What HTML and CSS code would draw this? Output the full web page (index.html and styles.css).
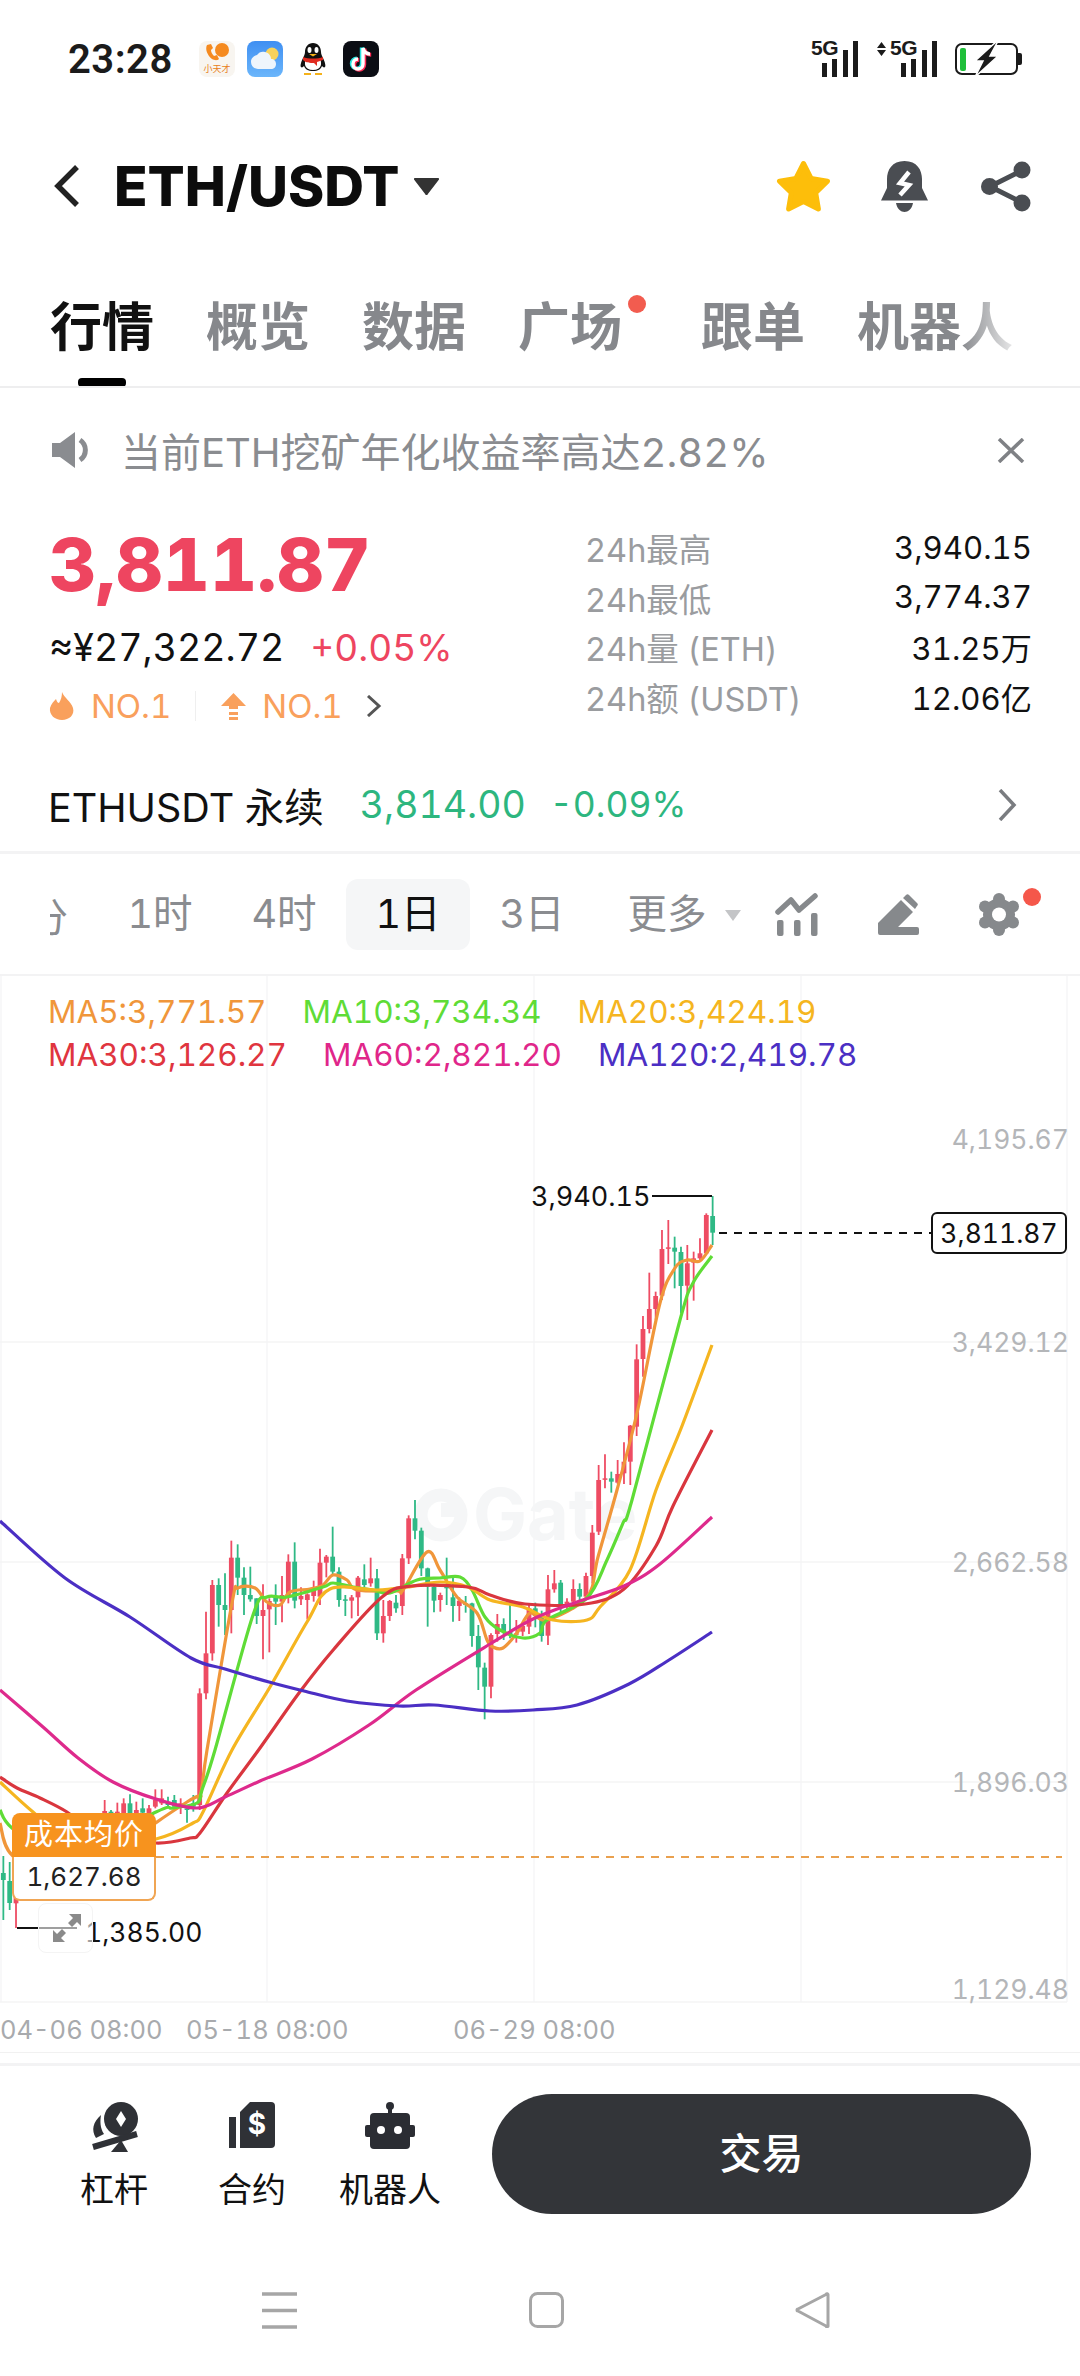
FILE: index.html
```html
<!DOCTYPE html>
<html lang="zh">
<head>
    <meta charset="UTF-8">
    <title>ETH/USDT</title>
    <meta name="viewport" content="width=device-width">
    <link rel="stylesheet" href="styles.css">
</head>
<body>
<section class="status-bar">
    <span class="status-time">23:28</span>
    <svg class="app-icon" width="36" height="36" viewBox="0 0 36 36">
        <rect width="36" height="36" rx="8" fill="#f8f5f0"/>
        <path d="M8 4c-2 4 0 10 5 14 2 1 5 2 7 0l-2-4-3 1c-2-2-3-4-3-6l2-2-2-4z" fill="#f58a1f"/>
        <circle cx="23" cy="9" r="7" fill="#f58a1f"/>
        <text class="app-icon-text" x="18" y="31">小天才</text>
    </svg>
    <svg class="app-icon" width="36" height="36" viewBox="0 0 36 36">
        <defs><linearGradient id="skyFill" x1="0" y1="0" x2="0" y2="1"><stop offset="0" stop-color="#3f8ff2"/><stop offset="1" stop-color="#6bb6fb"/></linearGradient></defs>
        <rect width="36" height="36" rx="8" fill="url(#skyFill)"/>
        <circle cx="25" cy="13" r="6.500" fill="#f7d25c"/>
        <path d="M11 28c-4 0-7-3-7-7s3-6 6-7c2-3 5-4 8-3 4 1 6 4 6 7 3 0 5 2 5 5s-2 5-5 5H11z" fill="#eef5fc"/>
    </svg>
    <svg class="app-icon app-icon-qq" width="26" height="32" viewBox="0 0 26 32">
        <path d="M13 0c5 0 8 4 8 9 0 2 1 4 2 6 2 4 3 8 2 9-1 1-2 0-3-1-1 3-4 5-9 5s-8-2-9-5c-1 1-2 2-3 1-1-1 0-5 2-9 1-2 2-4 2-6 0-5 3-9 8-9z" fill="#111"/>
        <path d="M6 16c-2 4-2 11 7 11s9-7 7-11H6z" fill="#fff"/>
        <path d="M3 14c5 2 15 2 20 0v3l-6 2v4l-3-3c-4 0-8 0-11-3v-3z" fill="#e02b20"/>
        <ellipse cx="9.500" cy="7" rx="2" ry="3" fill="#fff"/><ellipse cx="16.500" cy="7" rx="2" ry="3" fill="#fff"/>
        <path d="M9 11h8l-4 2.500z" fill="#f5b21a"/>
        <path d="M4 30h7v2H4zM15 30h7v2h-7z" fill="#f5b21a"/>
    </svg>
    <svg class="app-icon" width="36" height="36" viewBox="0 0 36 36">
        <rect width="36" height="36" rx="8" fill="#0b0d14"/>
        <path d="M20 7v16a5 5 0 1 1-5-5M20 7c1 4 4 6 7 6" fill="none" stroke="#25e3e0" stroke-width="4" transform="translate(-1.200 -.5)"/>
        <path d="M20 7v16a5 5 0 1 1-5-5M20 7c1 4 4 6 7 6" fill="none" stroke="#fb2c55" stroke-width="4" transform="translate(1.200 .8)"/>
        <path d="M20 7v16a5 5 0 1 1-5-5M20 7c1 4 4 6 7 6" fill="none" stroke="#fff" stroke-width="3.400"/>
    </svg>
    <div class="status-right">
        <div class="signal">
            <span class="signal-label">5G</span>
            <svg width="38" height="36" viewBox="0 0 38 36"><path d="M1 22h5v14H1zM11 18h5v18h-5zM22 9h5v27h-5zM32 0h5v36h-5z" fill="#1b1b1b"/></svg>
        </div>
        <div class="signal signal-data">
            <svg class="signal-arrows" width="9" height="14" viewBox="0 0 9 14"><path d="M4.500 0l4.500 6H0zM4.500 14L0 8h9z" fill="#1b1b1b"/></svg>
            <span class="signal-label">5G</span>
            <svg width="38" height="36" viewBox="0 0 38 36"><path d="M1 22h5v14H1zM11 18h5v18h-5zM22 9h5v27h-5zM32 0h5v36h-5z" fill="#1b1b1b"/></svg>
        </div>
        <svg class="battery" width="67" height="36" viewBox="0 0 67 36">
            <rect x="1" y="3" width="61" height="30" rx="6" fill="none" stroke="#1b1b1b" stroke-width="2"/>
            <path d="M63 12h2a2 2 0 0 1 2 2v8a2 2 0 0 1-2 2h-2z" fill="#1b1b1b"/>
            <rect x="5" y="7" width="6" height="23" rx="2" fill="#1fbf3a"/>
            <path d="M42 0L20 20h8l-8 16 23-21h-8l8-15z" fill="#1b1b1b" stroke="#fff" stroke-width="1.500"/>
        </svg>
    </div>
</section>

<header class="title-bar">
    <svg class="back-icon" width="26" height="42" viewBox="0 0 26 42"><path d="M23 2L4 21l19 19" fill="none" stroke="#222" stroke-width="5.500"/></svg>
    <h1 class="pair-name">ETH/USDT</h1>
    <svg class="pair-caret" width="25" height="17" viewBox="0 0 25 17"><path d="M1 0h23a1 1 0 0 1 1 1.500L13.500 16.500a1 1 0 0 1-2 0L0 1.500A1 1 0 0 1 1 0z" fill="#333"/></svg>
    <div class="title-tools">
        <svg width="55" height="52" viewBox="0 0 55 52"><path d="M27.500 3.500l7.600 15 16.400 2.600-11.800 11.700 2.700 16.200-14.900-7.600-14.900 7.600 2.700-16.200L3.500 21.100l16.400-2.600z" fill="#fdbe0a" stroke="#fdbe0a" stroke-width="5" stroke-linejoin="round"/></svg>
        <svg class="bell-icon" width="47" height="51" viewBox="0 0 47 51">
            <path d="M23.500 0C11 0 6 9 6 18v9L0 39.500h47L41 27v-9C41 9 36 0 23.500 0z" fill="#4a4d52"/>
            <path d="M15 42h17c-1 6-5 9-8.500 9S16 48 15 42z" fill="#4a4d52"/>
            <path d="M28 11l-9 11 9 2-9 10" fill="none" stroke="#fff" stroke-width="4.500"/>
        </svg>
        <svg width="50" height="51" viewBox="0 0 50 51">
            <path d="M41 9.500L9 25.500l32 16" fill="none" stroke="#4a4d52" stroke-width="5"/>
            <circle cx="41" cy="9" r="8.500" fill="#4a4d52"/><circle cx="8.500" cy="25.500" r="8.500" fill="#4a4d52"/><circle cx="41" cy="42" r="8.500" fill="#4a4d52"/>
        </svg>
    </div>
</header>

<nav class="tabs">
    <a class="tab tab-active">行情</a>
    <a class="tab">概览</a>
    <a class="tab">数据</a>
    <a class="tab tab-dot">广场</a>
    <a class="tab">跟单</a>
    <a class="tab">机器人</a>
</nav>

<section class="notice">
    <svg width="41" height="36" viewBox="0 0 41 36">
        <path d="M0 11h8L23 0v36L8 25H0z" fill="#8a8c90"/>
        <path d="M28 8a12 12 0 0 1 0 20" fill="none" stroke="#8a8c90" stroke-width="5"/>
    </svg>
    <p class="notice-text">当前ETH挖矿年化收益率高达2.82%</p>
    <svg class="notice-close" width="28" height="25" viewBox="0 0 28 25"><path d="M2 1l24 23M26 1L2 24" fill="none" stroke="#7f8185" stroke-width="3.500"/></svg>
</section>

<section class="quote">
    <div class="quote-main">
        <div class="last-price">3,811.87</div>
        <div class="quote-sub">
            <span class="cny-price">≈¥27,322.72</span>
            <span class="change-up">+0.05%</span>
        </div>
        <div class="rank-row">
            <svg width="26" height="28" viewBox="0 0 26 28"><path d="M13 0c2 6 9 9 11 16 2 7-4 12-11 12S0 23 1 16c1-4 4-7 6-9 1 3 2 4 3 4 2-3 3-7 3-11z" fill="#f9a05c"/></svg>
            <span class="rank-text">NO.1</span>
            <i class="rank-sep"></i>
            <svg width="25" height="27" viewBox="0 0 25 27"><path d="M12.500 0L25 13h-8v3H8v-3H0zM8 19h9v3H8zM8 24h9v3H8z" fill="#f9a05c"/></svg>
            <span class="rank-text">NO.1</span>
            <svg class="rank-more" width="16" height="22" viewBox="0 0 16 22"><path d="M2 1l11 10L2 21" fill="none" stroke="#555" stroke-width="3"/></svg>
        </div>
    </div>
    <dl class="stats">
        <div class="stat-row"><dt>24h最高</dt><dd>3,940.15</dd></div>
        <div class="stat-row"><dt>24h最低</dt><dd>3,774.37</dd></div>
        <div class="stat-row"><dt>24h量 (ETH)</dt><dd>31.25万</dd></div>
        <div class="stat-row"><dt>24h额 (USDT)</dt><dd>12.06亿</dd></div>
    </dl>
</section>

<section class="perp-row">
    <span class="perp-name">ETHUSDT 永续</span>
    <span class="perp-price">3,814.00</span>
    <span class="perp-change">-0.09%</span>
    <svg class="perp-more" width="19" height="32" viewBox="0 0 19 32"><path d="M2 1l14 15L2 31" fill="none" stroke="#7a7c80" stroke-width="3.500"/></svg>
</section>

<section class="timeframes">
    <span class="tf-clip"><span>分</span></span>
    <span class="tf-item">1时</span>
    <span class="tf-item">4时</span>
    <span class="tf-item tf-active">1日</span>
    <span class="tf-item">3日</span>
    <span class="tf-item tf-more">更多</span>
    <div class="tf-tools">
        <svg width="43" height="43" viewBox="0 0 43 43">
            <path d="M3 19L16 7l8 10L40 3" fill="none" stroke="#86898c" stroke-width="5.500" stroke-linecap="round" stroke-linejoin="round"/>
            <rect x="2" y="27" width="6.500" height="16" rx="2" fill="#86898c"/><rect x="19" y="27" width="6.500" height="16" rx="2" fill="#86898c"/><rect x="36" y="20" width="6.500" height="23" rx="2" fill="#86898c"/>
        </svg>
        <svg width="41" height="41" viewBox="0 0 41 41">
            <path d="M0 29L23 6l12 12-15 15h19a2 2 0 0 1 2 2v4a2 2 0 0 1-2 2H2a2 2 0 0 1-2-2z" fill="#86898c"/>
            <path d="M25 4l3-3a2 2 0 0 1 3 0l8 8a2 2 0 0 1 0 3l-2 3z" fill="#86898c"/>
        </svg>
        <span class="tf-gear">
            <svg width="40" height="43" viewBox="0 0 40 43">
                <circle cx="20" cy="21.500" r="16" fill="#86898c"/>
                <circle cx="20" cy="6" r="6" fill="#86898c"/><circle cx="20" cy="37" r="6" fill="#86898c"/>
                <circle cx="6" cy="13.500" r="6" fill="#86898c"/><circle cx="34" cy="13.500" r="6" fill="#86898c"/>
                <circle cx="6" cy="29.500" r="6" fill="#86898c"/><circle cx="34" cy="29.500" r="6" fill="#86898c"/>
                <circle cx="20" cy="21.500" r="7" fill="#fff"/>
            </svg>
        </span>
    </div>
</section>

<section class="chart">
    <svg id="klineChart" class="chart-canvas" viewBox="0 976 1080 1076"></svg>
    <div class="ma-legend">
        <div class="ma-row">
            <span class="ma5">MA5:3,771.57</span>
            <span class="ma10">MA10:3,734.34</span>
            <span class="ma20">MA20:3,424.19</span>
        </div>
        <div class="ma-row">
            <span class="ma30">MA30:3,126.27</span>
            <span class="ma60">MA60:2,821.20</span>
            <span class="ma120">MA120:2,419.78</span>
        </div>
    </div>
    <div class="y-label y1">4,195.67</div>
    <div class="y-label y2">3,429.12</div>
    <div class="y-label y3">2,662.58</div>
    <div class="y-label y4">1,896.03</div>
    <div class="y-label y5">1,129.48</div>
    <div class="x-label x1">04-06 08:00</div>
    <div class="x-label x2">05-18 08:00</div>
    <div class="x-label x3">06-29 08:00</div>
    <div class="high-label">3,940.15</div>
    <div class="low-label">1,385.00</div>
    <div class="last-tag">3,811.87</div>
    <div class="cost-tag">
        <div class="cost-title">成本均价</div>
        <div class="cost-value">1,627.68</div>
    </div>
    <div class="expand-btn">
        <svg width="28" height="28" viewBox="0 0 28 28"><path d="M16 0h12v12l-4-4-5 5-4-4 5-5zM0 16l4 4 5-5 4 4-5 5 4 4H0z" fill="#8a8a8a"/></svg>
    </div>
</section>

<section class="action-bar">
    <a class="action-item">
        <span class="action-icon">
            <svg width="48" height="50" viewBox="0 0 48 50">
                <circle cx="31" cy="17" r="17" fill="#2f3136"/>
                <path d="M31 9l5 8-5 8-5-8z" fill="#fff"/>
                <path d="M11 13C3 20 1 28 6 36l8-4c-4-6-4-13-3-19z" fill="#2f3136"/>
                <path d="M3 45l44-13" stroke="#2f3136" stroke-width="6"/>
                <path d="M21 50h17l-7-12z" fill="#2f3136"/>
            </svg>
        </span>
        <span>杠杆</span>
    </a>
    <a class="action-item">
        <span class="action-icon">
            <svg width="46" height="46" viewBox="0 0 46 46">
                <rect y="15" width="7" height="31" fill="#2f3136"/>
                <path d="M16 5l5-5h21a4 4 0 0 1 4 4v38a4 4 0 0 1-4 4H11V10z" fill="#2f3136"/>
                <text class="contract-sign" x="28" y="32">$</text>
            </svg>
        </span>
        <span>合约</span>
    </a>
    <a class="action-item">
        <span class="action-icon">
            <svg width="50" height="47" viewBox="0 0 50 47">
                <circle cx="25" cy="4" r="4" fill="#2b2d33"/><rect x="23" y="4" width="4" height="9" fill="#2b2d33"/>
                <rect x="5" y="11" width="40" height="36" rx="4" fill="#2b2d33"/>
                <rect y="23" width="50" height="12" rx="2" fill="#2b2d33"/>
                <circle cx="16" cy="28" r="4" fill="#fff"/><circle cx="33" cy="28" r="4" fill="#fff"/>
            </svg>
        </span>
        <span>机器人</span>
    </a>
    <a class="trade-btn">交易</a>
</section>

<section class="nav-bar">
    <svg width="35" height="37" viewBox="0 0 35 37"><path d="M0 2h35M0 18.500h35M0 35h35" stroke="#a6a6a6" stroke-width="3.500"/></svg>
    <svg width="35" height="36" viewBox="0 0 35 36"><rect x="1.500" y="1.500" width="32" height="33" rx="7" fill="none" stroke="#a6a6a6" stroke-width="3"/></svg>
    <svg width="36" height="36" viewBox="0 0 36 36"><path d="M33 3a1 1 0 0 0-2-.5L3 17a1 1 0 0 0 0 2l28 15a1 1 0 0 0 2-.5z" fill="none" stroke="#a6a6a6" stroke-width="3" stroke-linejoin="round"/></svg>
</section>
<script src="chart.js"></script>
</body>
</html>
```

FILE: styles.css
```css
html,body,h1,p,dl,dd{margin: 0;padding: 0;}
body{ width: 1080px; height: 2376px; overflow: hidden; background: #fff; color: #111;
      font-family: Inter,"Noto Sans CJK SC",sans-serif; font-variant-numeric: tabular-nums; }
a{ text-decoration: none; color: inherit; }
svg{ display: block; flex-shrink: 0; }

.status-bar{ height: 118px; box-sizing: border-box; padding: 0 58px 0 68px; display: flex; align-items: center; }
.status-time{ font-family: Roboto,sans-serif; font-size: 40px; font-weight: 600; color: #1b1b1b; margin-right: 26px; letter-spacing: 0.5px; }
.app-icon{ margin-right: 12px; }
.app-icon-qq{ margin: 0 17px 0 5px; }
.app-icon-text{ font-size: 9px; fill: #e8801a; text-anchor: middle; }
.status-right{ margin-left: auto; display: flex; align-items: center; }
.signal{ position: relative; width: 48px; height: 36px; display: flex; justify-content: flex-end; margin-right: 18px; }
.signal-data{ width: 61px; margin-right: 17px; }
.signal-label{ position: absolute; left: 0; top: -3px; font-family: "Liberation Sans",sans-serif; font-size: 21px; font-weight: 700; letter-spacing: -0.5px; color: #1b1b1b; line-height: 20px; background: #fff; padding-right: 1px; }
.signal-data .signal-label{ left: 13px; }
.signal-arrows{ position: absolute; left: 0; top: 1px; }

.title-bar{ height: 136px; box-sizing: border-box; padding: 0 49px 0 54px; display: flex; align-items: center; }
.pair-name{ margin-left: 34px; font-size: 55px; font-weight: 800; line-height: 60px; color: #0c0c0c; }
.pair-caret{ margin-left: 15px; }
.title-tools{ margin-left: auto; display: flex; align-items: center; gap: 50px; }
.bell-icon{ margin-right: 3px; }

.tabs{ position: relative; height: 134px; box-sizing: border-box; padding: 16px 0 0 50px; border-bottom: 2px solid #eeeeef; display: flex; align-items: center; gap: 52px; overflow: hidden; }
.tabs::after{ content: ""; position: absolute; right: 60px; top: 30px; bottom: 20px; width: 60px; background: linear-gradient(to right,rgba(255,255,255,0),rgba(255,255,255,.9)); }
.tab{ position: relative; font-size: 52px; font-weight: 700; line-height: 60px; color: #86888c; flex-shrink: 0; }
.tab-active{ color: #111; }
.tab-active::after{ content: ""; position: absolute; left: 28px; bottom: -29px; width: 48px; height: 9px; border-radius: 4px; background: #000; }
.tab-dot{ margin-right: 27px; }
.tab-dot::after{ content: ""; position: absolute; right: -24px; top: -3px; width: 18px; height: 18px; border-radius: 50%; background: #f25c4f; }

.notice{ height: 124px; box-sizing: border-box; padding: 0 55px 0 52px; display: flex; align-items: center; }
.notice-text{ margin-left: 28px; font-size: 40px; color: #8a8c90; }
.notice-close{ margin-left: auto; }

.quote{ height: 246px; display: flex; }
.quote-main{ width: 585px; box-sizing: border-box; padding: 16px 0 0 49px; }
.last-price{ height: 74px; font-size: 73px; line-height: 74px; font-weight: 800; color: #ee4560; }
.quote-sub{ margin-top: 24px; height: 42px; display: flex; align-items: center; gap: 26px; font-size: 37.500px; }
.change-up{ font-size: 37px; color: #ee4560; }
.rank-row{ margin-top: 18px; height: 40px; display: flex; align-items: center; font-size: 33px; color: #f9a05c; }
.rank-text{ margin-left: 16px; }
.rank-sep{ width: 1px; height: 30px; background: #efefef; margin: 0 25px 0 24px; }
.rank-more{ margin-left: 23px; }
.stats{ width: 447px; padding-top: 11px; }
.stat-row{ height: 49.600px; display: flex; justify-content: space-between; align-items: center; }
.stat-row dt{ font-size: 32.500px; color: #9a9c9f; }
.stat-row dd{ font-size: 31.200px; color: #111; }

.perp-row{ height: 96px; box-sizing: border-box; padding: 0 63px 0 48px; border-bottom: 3px solid #f3f3f4; display: flex; align-items: center; font-size: 39.500px; }
.perp-price{ margin-left: 36px; font-size: 37.500px; color: #2db67f; }
.perp-change{ margin-left: 24px; font-size: 35.500px; color: #2db67f; }
.perp-more{ margin-left: auto; }

.timeframes{ height: 122px; box-sizing: border-box; padding: 0 61px 0 50px; border-bottom: 2px solid #f3f3f4; display: flex; align-items: center; font-size: 39.500px; color: #8a8c90; }
.tf-clip{ width: 18px; overflow: hidden; display: flex; justify-content: flex-end; margin-right: 30px; }
.tf-clip span{ flex-shrink: 0; }
.tf-item{ position: relative; width: 124px; height: 71px; line-height: 71px; text-align: center; border-radius: 12px; }
.tf-active{ background: #f5f6f7; color: #111; }
.tf-more{ margin-left: 11px; }
.tf-more::after{ content: ""; position: absolute; right: -12px; top: 31px; border: 8.500px solid transparent; border-top: 11px solid #c4c5c7; }
.tf-tools{ margin-left: auto; display: flex; align-items: center; gap: 60px; }
.tf-gear{ position: relative; }
.tf-gear::after{ content: ""; position: absolute; left: 44px; top: -5px; width: 18px; height: 18px; border-radius: 50%; background: #f5574a; }

.chart{ position: relative; height: 1076px; border-bottom: 1px solid #f1f1f1; }
.chart-canvas{ position: absolute; left: 0; top: 0; width: 1080px; height: 1076px; }
.ma-legend{ position: relative; padding: 14px 0 0 48px; font-size: 31.500px; line-height: 43px; }
.ma-row{ display: flex; gap: 36px; }
.ma5{ color: #f0963a; }
.ma10{ color: #5fdc36; }
.ma20{ color: #f5b520; }
.ma30{ color: #e0353f; }
.ma60{ color: #e0268a; }
.ma120{ color: #4b2fc4; }

.y-label,.x-label,.high-label,.low-label,.last-tag{ position: absolute; font-size: 26.500px; line-height: 32px; white-space: nowrap; }
.y-label{ right: 11px; color: #b4b6b9; }
.y1{ top: 147px; }
.y2{ top: 350px; }
.y3{ top: 570px; }
.y4{ top: 790px; }
.y5{ top: 997px; }
.x-label{ top: 1038px; font-size: 25.500px; color: #a8aaad; }
.x1{ left: 0; }
.x2{ left: 186px; }
.x3{ left: 453px; }
.high-label{ left: 531px; top: 205px; font-size: 27px; color: #111; }
.low-label{ left: 85px; top: 940px; color: #111; }
.last-tag{ left: 931px; top: 236px; width: 136px; height: 42px; box-sizing: border-box; border: 2px solid #111; border-radius: 6px; background: #fff; line-height: 38px; text-align: center; color: #111; }
.cost-tag{ position: absolute; left: 12px; top: 837px; width: 144px; }
.cost-title{ height: 44px; line-height: 44px; text-align: center; font-size: 29px; letter-spacing: 1px; color: #fff; background: #f7931e; border-radius: 8px 8px 0 0; }
.cost-value{ height: 44px; box-sizing: border-box; line-height: 40px; text-align: center; font-size: 26px; color: #222; background: #fff; border: 2px solid #f0a553; border-top: 0; border-radius: 0 0 8px 8px; }
.expand-btn{ position: absolute; left: 38px; top: 927px; width: 55px; height: 50px; box-sizing: border-box; padding: 10px 0 0 14px; background: rgba(255,255,255,.6); border: 1px solid #f4f4f4; border-radius: 8px; }

.action-bar{ height: 176px; box-sizing: border-box; padding: 0 49px 0 45px; border-top: 3px solid #f3f3f4; margin-top: 10px; display: flex; align-items: flex-start; }
.action-item{ display: flex; flex-direction: column; align-items: center; width: 138px; padding-top: 36px; font-size: 34px; line-height: 40px; color: #111; }
.action-icon{ height: 50px; margin-bottom: 18px; display: block; }
.contract-sign{ font-size: 28px; font-weight: 700; fill: #fff; text-anchor: middle; }
.trade-btn{ margin: 28px 0 0 auto; width: 539px; height: 120px; border-radius: 60px; background: #333539; color: #fff; font-size: 42px; font-weight: 500; line-height: 120px; text-align: center; }

.nav-bar{ height: 134px; box-sizing: border-box; padding: 53px 249px 0 262px; display: flex; align-items: flex-start; justify-content: space-between; }
```

FILE: chart.js
```js
var SVG_NS="http://www.w3.org/2000/svg";
var oChart=document.getElementById("klineChart");

var RED="#ee4c63";
var GREEN="#2fb985";
// candle values are offsets from y=1490 in thirds of a pixel: [index,colour,high,top,bottom,low]
var aCandles=[
    [-31,"g",1098,1149,1170,1290],[-30,"g",1116,1173,1239,1260],[-29,"r",1215,1215,1240,1314],
    [-15,"r",930,963,975,985],[-14,"g",960,965,975,985],[-13,"r",938,965,975,985],[-12,"r",925,940,975,985],
    [-11,"g",913,940,975,985],[-10,"r",935,960,975,980],[-9,"g",925,955,968,975],[-8,"r",945,955,970,975],
    [-7,"r",898,930,950,955],[-6,"r",898,925,940,945],[-5,"g",920,935,945,950],[-4,"g",915,930,950,955],
    [-3,"r",925,940,950,972],[-2,"g",945,955,960,998],[-1,"g",915,940,950,965],
    [0,"r",595,610,945,960],[1,"r",365,490,610,628],[2,"r",270,285,490,512],[3,"g",265,285,345,410],
    [4,"g",250,345,360,435],[5,"r",152,203,360,430],[6,"g",163,203,263,315],[7,"g",232,263,315,375],
    [8,"g",230,315,328,335],[9,"g",325,325,378,402],[10,"r",283,360,378,508],[11,"r",325,333,358,487],
    [12,"g",283,318,335,405],[13,"r",258,315,335,397],[14,"r",193,215,315,340],[15,"g",157,215,332,355],
    [16,"r",292,318,328,345],[17,"r",310,313,330,388],[18,"r",272,300,318,335],[19,"r",176,218,320,345],
    [20,"r",195,200,218,262],[21,"g",110,200,245,255],[22,"g",232,245,330,350],[23,"g",315,328,332,378],
    [24,"r",315,322,332,385],[25,"r",258,263,322,378],[26,"g",223,268,285,292],[27,"r",203,265,280,290],
    [28,"g",237,265,430,450],[29,"r",330,378,430,458],[30,"r",330,333,378,393],[31,"g",315,338,355,368],
    [32,"r",192,205,348,375],[33,"r",76,85,205,222],[34,"g",30,85,122,148],[35,"g",113,122,235,258],
    [36,"g",233,235,290,410],[37,"g",288,290,332,367],[38,"r",308,315,330,365],[39,"g",203,285,295,345],
    [40,"g",260,322,348,395],[41,"r",322,332,348,393],[42,"g",318,340,345,368],[43,"g",338,340,438,470],
    [44,"g",405,438,532,600],[45,"g",518,533,590,688],[46,"r",430,435,590,625],[47,"r",372,402,432,455],
    [48,"g",385,402,425,450],[49,"g",342,425,435,445],[50,"r",390,430,432,458],[51,"r",403,408,425,438],
    [52,"r",340,355,410,432],[53,"g",338,355,378,412],[54,"g",362,372,438,455],[55,"r",255,298,437,465],
    [56,"r",240,280,298,308],[57,"g",270,278,352,378],[58,"r",325,335,352,365],[59,"r",268,297,335,358],
    [60,"g",280,297,320,345],[61,"r",248,258,320,325],[62,"r",105,128,258,280],[63,"r",-75,-30,125,135],
    [64,"r",-107,-35,-32,-5],[65,"g",-55,-35,-25,8],[66,"r",-90,-48,-22,-18],[67,"r",-143,-85,-50,-18],
    [68,"r",-195,-193,-85,-15],[69,"r",-437,-392,-190,-162],[70,"r",-522,-483,-393,-340],[71,"r",-652,-543,-483,-470],
    [72,"r",-595,-582,-543,-510],[73,"r",-780,-723,-583,-570],[74,"r",-810,-728,-724,-678],[75,"g",-760,-727,-715,-605],
    [76,"g",-730,-714,-612,-530],[77,"r",-735,-680,-613,-510],[78,"r",-715,-695,-682,-568],[79,"r",-755,-710,-695,-690],
    [80,"r",-830,-825,-710,-708],[81,"g",-882,-822,-772,-735]
];

var aLines=[
    {color:"#f0963a",points:[[0,1823],[12,1855],[60,1880],[187,1802],[200,1795],[207,1750],[232,1603],[238,1588],[255,1588],[267,1602],[280,1605],[290,1592],[310,1589],[323,1585],[333,1575],[347,1580],[357,1590],[397,1591],[403,1590],[427,1552],[440,1570],[457,1597],[477,1613],[487,1640],[493,1647],[503,1648],[517,1633],[530,1613],[547,1620],[587,1597],[598,1557],[617,1490],[637,1413],[660,1303],[675,1268],[687,1260],[700,1261],[712,1245]]},
    {color:"#5fdc36",points:[[0,1810],[12,1828],[60,1860],[156,1812],[173,1808],[197,1803],[202,1790],[215,1750],[253,1615],[267,1597],[287,1597],[323,1587],[333,1583],[353,1587],[373,1590],[390,1593],[417,1580],[440,1578],[460,1577],[472,1590],[485,1617],[500,1630],[523,1638],[540,1633],[547,1620],[587,1598],[607,1560],[623,1523],[632,1500],[680,1320],[693,1283],[712,1256]]},
    {color:"#f5b520",points:[[0,1782],[33,1812],[80,1850],[156,1839],[193,1823],[203,1812],[232,1750],[270,1687],[307,1622],[330,1589],[377,1590],[407,1587],[440,1582],[468,1587],[490,1600],[523,1607],[553,1620],[587,1620],[600,1607],[630,1570],[656,1490],[682,1426],[712,1345]]},
    {color:"#d9363e",points:[[0,1777],[17,1788],[40,1798],[67,1812],[100,1835],[156,1843],[190,1838],[200,1833],[227,1793],[260,1748],[299,1693],[334,1649],[382,1597],[412,1586],[468,1587],[490,1595],[525,1604],[585,1604],[624,1589],[656,1546],[673,1506],[712,1430]]},
    {color:"#de2a8c",points:[[0,1690],[43,1727],[78,1758],[113,1782],[156,1799],[197,1808],[225,1797],[260,1781],[312,1759],[369,1725],[416,1690],[490,1644],[533,1619],[577,1602],[624,1586],[660,1564],[712,1517]]},
    {color:"#4b2fc4",points:[[0,1521],[65,1578],[130,1617],[191,1658],[225,1669],[269,1682],[304,1691],[347,1701],[399,1706],[434,1705],[490,1711],[533,1710],[577,1705],[629,1684],[669,1660],[712,1632]]}
];

function add(sTag,oAttr,sText){
    var oEl=document.createElementNS(SVG_NS,sTag);
    for(var sKey in oAttr){
        oEl.setAttribute(sKey,oAttr[sKey]);
    }
    if(sText){
        oEl.textContent=sText;
    }
    oChart.appendChild(oEl);
    return oEl;
}

function drawGrid(){
    var aX=[1,267,534,801,1067];
    var aY=[1342,1562,1782,2002];
    for(var i=0;i<aX.length;i++){
        add("line",{x1:aX[i],x2:aX[i],y1:976,y2:2002,stroke:"#f6f6f7","stroke-width":1.5});
    }
    for(var j=0;j<aY.length;j++){
        add("line",{x1:0,x2:1067,y1:aY[j],y2:aY[j],stroke:"#f4f4f5","stroke-width":1.5});
    }
}

function drawWatermark(){
    add("circle",{cx:441,cy:1515,r:20,fill:"none",stroke:"#f5f6f7","stroke-width":13});
    add("rect",{x:441,y:1503,width:14,height:14,fill:"#f5f6f7"});
    add("text",{x:473,y:1540,fill:"#f5f6f7","font-size":72,"font-weight":700,"font-family":"Inter,sans-serif"},"Gate");
}

function drawCandles(){
    for(var i=0;i<aCandles.length;i++){
        var c=aCandles[i];
        var iX=199.67+c[0]*6.333;
        var sColor=c[1]=="r"?RED:GREEN;
        var iTop=1490+c[3]/3;
        var iBottom=1490+c[4]/3;
        add("line",{x1:iX,x2:iX,y1:1490+c[2]/3,y2:1490+c[5]/3,stroke:sColor,"stroke-width":1.8});
        add("rect",{x:iX-2.4,y:iTop,width:4.8,height:Math.max(iBottom-iTop,1.5),fill:sColor});
    }
}

// catmull-rom through the points, so the averages don't look like polylines
function smoothPath(aP){
    var sD="M"+aP[0][0]+" "+aP[0][1];
    for(var i=0;i<aP.length-1;i++){
        var p0=aP[i-1]||aP[i];
        var p1=aP[i];
        var p2=aP[i+1];
        var p3=aP[i+2]||p2;
        sD+="C"+(p1[0]+(p2[0]-p0[0])/6)+" "+(p1[1]+(p2[1]-p0[1])/6)+" "+(p2[0]-(p3[0]-p1[0])/6)+" "+(p2[1]-(p3[1]-p1[1])/6)+" "+p2[0]+" "+p2[1];
    }
    return sD;
}

function drawLines(){
    for(var i=0;i<aLines.length;i++){
        add("path",{d:smoothPath(aLines[i].points),fill:"none",stroke:aLines[i].color,"stroke-width":3.2});
    }
}

function drawMarkers(){
    add("path",{d:"M652 1196H712",stroke:"#111","stroke-width":2,fill:"none"});
    add("path",{d:"M719 1233H931",stroke:"#111","stroke-width":2,"stroke-dasharray":"8 7",fill:"none"});
    add("path",{d:"M156 1857H1062",stroke:"#e9a04e","stroke-width":2,"stroke-dasharray":"8 7",fill:"none"});
    add("path",{d:"M17 1928H77",stroke:"#111","stroke-width":2,fill:"none"});
}

drawGrid();
drawWatermark();
drawCandles();
drawLines();
drawMarkers();
```
